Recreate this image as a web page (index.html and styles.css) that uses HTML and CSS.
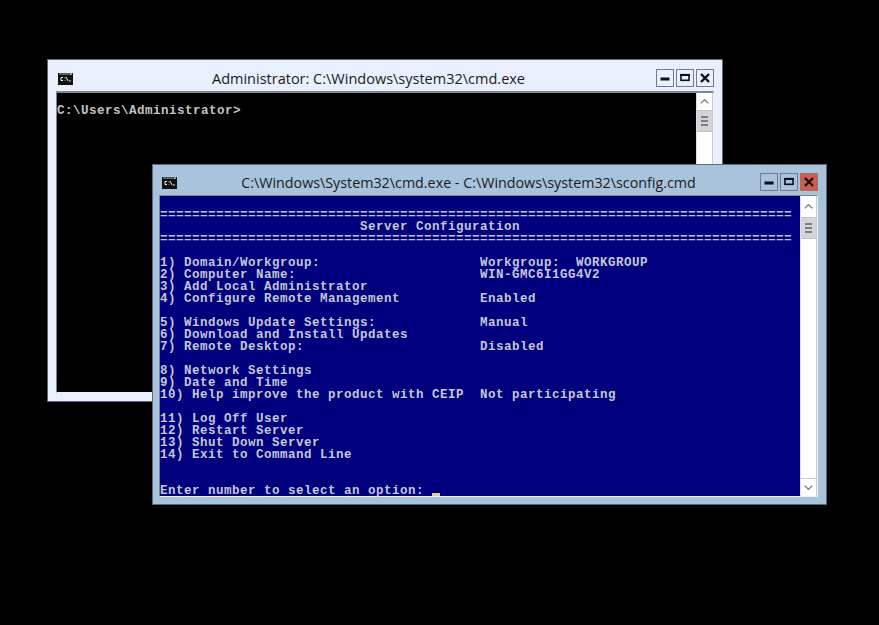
FILE: index.html
```html
<!DOCTYPE html>
<html lang="en">
<head>
<meta charset="utf-8">
<title>Server Configuration</title>
<link rel="stylesheet" href="styles.css">
</head>
<body>
<main class="desktop">
  <section class="window window-back">
    <header class="titlebar">
      <svg class="app-icon" viewBox="0 0 15 12"><rect width="15" height="12" fill="#111"/><rect x="1" y="0.5" width="13" height="1" fill="#9aa"/><rect x="12" y="0.5" width="2" height="1" fill="#ddd"/><path d="M5 4.5H3v3h2M7 4.5v.8M7 7v.5M8 4l2 4M11 8h2" stroke="#eee" fill="none"/></svg>
      <h1 class="title">Administrator: C:\Windows\system32\cmd.exe</h1>
      <div class="controls">
        <span class="ctl"><svg viewBox="0 0 16 16"><rect x="3.5" y="7.5" width="9" height="3" fill="#0a0e1c"/></svg></span>
        <span class="ctl"><svg viewBox="0 0 16 16"><rect x="4" y="4.7" width="8" height="5.6" fill="none" stroke="#0a0e1c" stroke-width="1.6"/><rect x="3.2" y="4" width="9.6" height="2" fill="#0a0e1c"/></svg></span>
        <span class="ctl"><svg viewBox="0 0 16 16"><path d="M4 4l8 8M12 4l-8 8" stroke="#0a0e1c" stroke-width="2.4"/></svg></span>
      </div>
    </header>
    <div class="client">
      <pre class="console console-black">

C:\Users\Administrator&gt;</pre>
      <div class="scrollbar">
        <span class="arrow"><svg viewBox="0 0 16 16"><path d="M4 10l4-4 4 4" fill="none" stroke="#777" stroke-width="1.5"/></svg></span>
        <span class="thumb"><i></i><i></i><i></i></span>
      </div>
    </div>
  </section>

  <section class="window window-front">
    <header class="titlebar">
      <svg class="app-icon" viewBox="0 0 15 12"><rect width="15" height="12" fill="#111"/><rect x="1" y="0.5" width="13" height="1" fill="#9aa"/><rect x="12" y="0.5" width="2" height="1" fill="#ddd"/><path d="M5 4.5H3v3h2M7 4.5v.8M7 7v.5M8 4l2 4M11 8h2" stroke="#eee" fill="none"/></svg>
      <h1 class="title">C:\Windows\System32\cmd.exe - C:\Windows\system32\sconfig.cmd</h1>
      <div class="controls">
        <span class="ctl"><svg viewBox="0 0 16 16"><rect x="3.5" y="7.5" width="9" height="3" fill="#0a0e1c"/></svg></span>
        <span class="ctl"><svg viewBox="0 0 16 16"><rect x="4" y="4.7" width="8" height="5.6" fill="none" stroke="#0a0e1c" stroke-width="1.6"/><rect x="3.2" y="4" width="9.6" height="2" fill="#0a0e1c"/></svg></span>
        <span class="ctl ctl-close"><svg viewBox="0 0 16 16"><path d="M4 4l8 8M12 4l-8 8" stroke="#2a0a08" stroke-width="2.4"/></svg></span>
      </div>
    </header>
    <div class="client">
      <pre class="console console-blue">

===============================================================================
                         Server Configuration
===============================================================================

1) Domain/Workgroup:                    Workgroup:  WORKGROUP
2) Computer Name:                       WIN-GMC6I1GG4V2
3) Add Local Administrator
4) Configure Remote Management          Enabled

5) Windows Update Settings:             Manual
6) Download and Install Updates
7) Remote Desktop:                      Disabled

8) Network Settings
9) Date and Time
10) Help improve the product with CEIP  Not participating

11) Log Off User
12) Restart Server
13) Shut Down Server
14) Exit to Command Line


Enter number to select an option: <span class="cursor"></span></pre>
      <div class="scrollbar">
        <span class="arrow"><svg viewBox="0 0 16 16"><path d="M4 10l4-4 4 4" fill="none" stroke="#777" stroke-width="1.5"/></svg></span>
        <span class="thumb"><i></i><i></i><i></i></span>
        <span class="track"></span>
        <span class="arrow arrow-down"><svg viewBox="0 0 16 16"><path d="M4 6l4 4 4-4" fill="none" stroke="#777" stroke-width="1.5"/></svg></span>
      </div>
    </div>
  </section>
</main>
</body>
</html>
```
FILE: styles.css
```css
* { box-sizing: border-box; }
html, body { margin: 0; height: 100%; background: #000; overflow: hidden; }
.desktop { position: relative; width: 879px; height: 625px; background: #000; }

.window {
  position: absolute;
  display: flex;
  flex-direction: column;
  border: 1px solid #5f6a78;
  padding: 0 8px 8px;
}
.window-back { left: 47px; top: 59px; width: 676px; height: 343px; background: #e9effc; }
.window-front { left: 152px; top: 164px; width: 675px; height: 341px; background: #a9c3dd; padding: 0 8px 7px 6px; }

.titlebar { display: flex; align-items: center; height: 31px; padding-top: 4px; flex: none; }
.window-front .titlebar { height: 30px; }
.app-icon { width: 15px; height: 12px; margin: 2px 0 0 2px; flex: none; }
.window-front .app-icon { margin-left: 3px; }
.title {
  flex: 1;
  margin: 0;
  padding-top: 2px;
  text-align: center;
  font: 400 14.5px/20px "Open Sans", "Noto Sans", sans-serif;
  color: #1a1c22;
  white-space: nowrap;
}
.window-back .title { padding-left: 8px; }
.window-front .title { font-size: 14.3px; }
.controls { display: flex; gap: 2px; flex: none; }
.ctl { width: 18px; height: 18px; border: 1px solid #6f7c8e; display: block; }
.ctl svg { display: block; width: 16px; height: 16px; }
.ctl-close { background: #c8604f; border-color: #b26a60; }

.client {
  flex: 1;
  display: flex;
  min-height: 0;
  border: 1px solid #7d8794;
  border-top-width: 2px;
  border-right-color: #f0f3f8;
  border-bottom-color: #eef2f8;
}
.window-front .client { border-top-width: 1px; }
.console {
  flex: 1;
  margin: 0;
  font: 700 12.5px/12px "Liberation Mono", "DejaVu Sans Mono", monospace;
  letter-spacing: 0.5px;
  color: #c4c4c4;
}
.console-black { background: #000; }
.console-blue { background: #00007e; color: #c6c6d8; padding-top: 1px; }
.cursor {
  display: inline-block;
  width: 8px;
  height: 3px;
  background: #d6d29a;
  vertical-align: -2px;
}

.scrollbar {
  width: 17px;
  flex: none;
  display: flex;
  flex-direction: column;
  background: #fff;
  border-right: 1px solid #c8ccd2;
  border-left: 1px solid #dde;
}
.arrow { height: 17px; flex: none; display: block; }
.arrow svg { display: block; width: 15px; height: 17px; }
.window-front .arrow { height: 21px; }
.window-front .arrow svg { margin-top: 2px; }
.window-front .arrow-down { height: 18px; border-top: 1px solid #c8ccd2; }
.window-front .arrow-down svg { margin-top: 0; }
.thumb {
  height: 22px;
  flex: none;
  display: flex;
  flex-direction: column;
  gap: 2px;
  align-items: center;
  justify-content: center;
  background: #d2d4d6;
  border-top: 1px solid #bfc2c6;
  border-bottom: 1px solid #bfc2c6;
}
.thumb i { display: block; width: 7px; height: 2px; background: #7c7f84; }
.track { flex: 1; }
```
